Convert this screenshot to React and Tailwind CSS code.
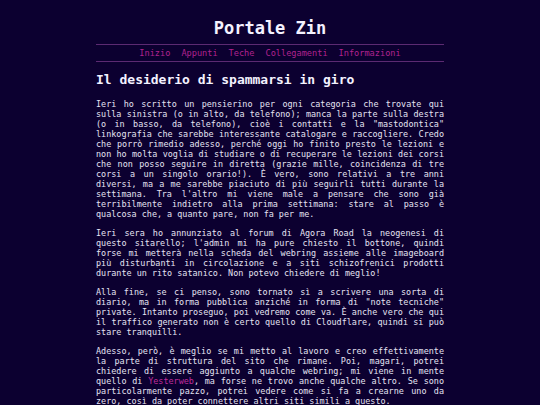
export default function App() {
  const nav = ['Inizio', 'Appunti', 'Teche', 'Collegamenti', 'Informazioni'];
  return (
    <div className="min-h-screen bg-[#0c0030] text-[#e4e2f2] font-['DejaVu_Sans_Mono',monospace]">
      <div className="w-[348px] mx-auto">
        {/* Header */}
        <h1 className="pt-[18px] text-[17px] leading-[20px] font-bold text-center text-[#f4f2ff] mb-[6px]">
          Portale Zin
        </h1>
        <nav className="border-y border-[#5c2a72] pt-[3px] pb-[3px] flex justify-center gap-[11px] text-[8.6px] leading-[10px] text-[#b0228f]">
          {nav.map((n) => (
            <a key={n} href="#">{n}</a>
          ))}
        </nav>

        {/* Post */}
        <h2 className="mt-[10px] mb-[11px] text-[13px] leading-[16px] font-bold text-[#f4f2ff]">
          Il desiderio di spammarsi in giro
        </h2>
        <div className="text-[8.45px] leading-[10px] text-justify">
          <p className="mb-[9px]">
            Ieri ho scritto un pensierino per ogni categoria che trovate qui sulla sinistra (o in alto, da telefono); manca la parte sulla destra (o in basso, da telefono), cioè i contatti e la "mastodontica" linkografia che sarebbe interessante catalogare e raccogliere. Credo che porrò rimedio adesso, perché oggi ho finito presto le lezioni e non ho molta voglia di studiare o di recuperare le lezioni dei corsi che non posso seguire in diretta (grazie mille, coincidenza di tre corsi a un singolo orario!). È vero, sono relativi a tre anni diversi, ma a me sarebbe piaciuto di più seguirli tutti durante la settimana. Tra l'altro mi viene male a pensare che sono già terribilmente indietro alla prima settimana: stare al passo è qualcosa che, a quanto pare, non fa per me.
          </p>
          <p className="mb-[9px]">
            Ieri sera ho annunziato al forum di Agora Road la neogenesi di questo sitarello; l'admin mi ha pure chiesto il bottone, quindi forse mi metterà nella scheda del webring assieme alle imageboard più disturbanti in circolazione e a siti schizofrenici prodotti durante un rito satanico. Non potevo chiedere di meglio!
          </p>
          <p className="mb-[9px]">
            Alla fine, se ci penso, sono tornato sì a scrivere una sorta di diario, ma in forma pubblica anziché in forma di "note tecniche" private. Intanto proseguo, poi vedremo come va. È anche vero che qui il traffico generato non è certo quello di Cloudflare, quindi si può stare tranquilli.
          </p>
          <p className="mb-[9px]">
            Adesso, però, è meglio se mi metto al lavoro e creo effettivamente la parte di struttura del sito che rimane. Poi, magari, potrei chiedere di essere aggiunto a qualche webring; mi viene in mente quello di <a href="#" className="text-[#c02c9c]">Yesterweb</a>, ma forse ne trovo anche qualche altro. Se sono particolarmente pazzo, potrei vedere come si fa a crearne uno da zero, così da poter connettere altri siti simili a questo.
          </p>
        </div>
      </div>
    </div>
  );
}
